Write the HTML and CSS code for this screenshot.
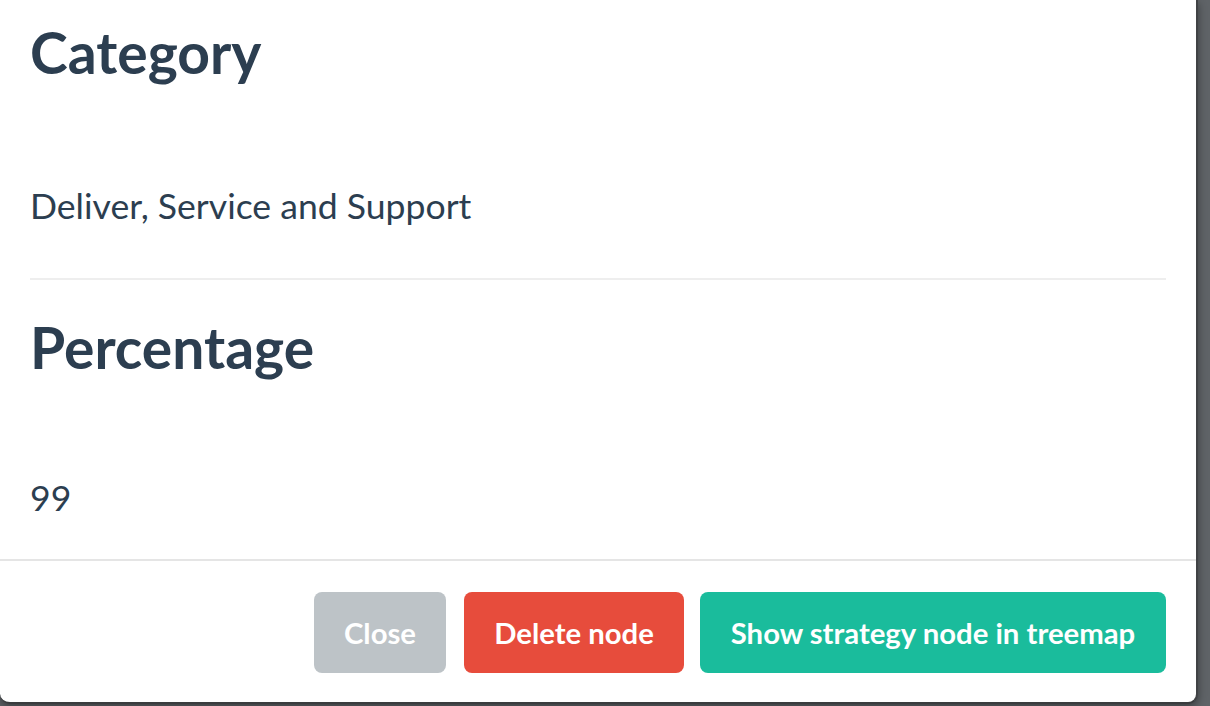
FILE: index.html
```html
<!DOCTYPE html>
<html>
<head>
<meta charset="utf-8">
<link rel="stylesheet" href="styles.css">
</head>
<body>
<div class="modal">
  <div class="modal-body">
    <h3 class="label">Category</h3>
    <p class="value">Deliver, Service and Support</p>
    <hr class="sep">
    <h3 class="label label-2">Percentage</h3>
    <p class="value value-2">99</p>
  </div>
  <div class="modal-footer">
    <button class="btn btn-close">Close</button>
    <button class="btn btn-danger">Delete node</button>
    <button class="btn btn-success">Show strategy node in treemap</button>
  </div>
</div>
</body>
</html>
```
FILE: styles.css
```css
html, body {
  margin: 0;
  padding: 0;
}
body {
  width: 1210px;
  height: 706px;
  overflow: hidden;
  background: #5f6367;
  font-family: Lato, "Noto Sans", sans-serif;
  color: #2c3e50;
}
.modal {
  width: 1196px;
  background: #ffffff;
  border-right: 2px solid #404245;
  border-bottom: 2px solid #3a3c3e;
  border-radius: 0 0 10px 10px;
  box-shadow: 0 3px 8px rgba(0, 0, 0, 0.4);
}
.modal-body {
  padding: 24px 30px 43px 30px;
}
.label {
  margin: 0;
  font-size: 57px;
  line-height: 1;
  font-weight: 700;
}
.label-2 {
  margin-top: 39px;
}
.value {
  margin: 107px 0 0 0;
  font-size: 35.6px;
  line-height: 36px;
  font-weight: 400;
}
.value-2 {
  margin-top: 104px;
}
.sep {
  margin: 54px 0 0 0;
  border: 0;
  height: 2px;
  background: #eeeeee;
}
.modal-footer {
  border-top: 2px solid #e5e5e5;
  padding: 31px 30px 29px 30px;
  display: flex;
  justify-content: flex-end;
}
.btn {
  height: 81px;
  padding: 0;
  border: 0;
  border-radius: 8px;
  font-family: Lato, "Noto Sans", sans-serif;
  font-size: 29.3px;
  font-weight: 700;
  white-space: nowrap;
  color: #ffffff;
  display: flex;
  align-items: center;
  justify-content: center;
}
.btn-close {
  width: 132px;
  background: #bdc3c7;
}
.btn-danger {
  width: 220px;
  margin-left: 18px;
  background: #e74c3c;
}
.btn-success {
  width: 466px;
  margin-left: 16px;
  background: #1abc9c;
}
```
